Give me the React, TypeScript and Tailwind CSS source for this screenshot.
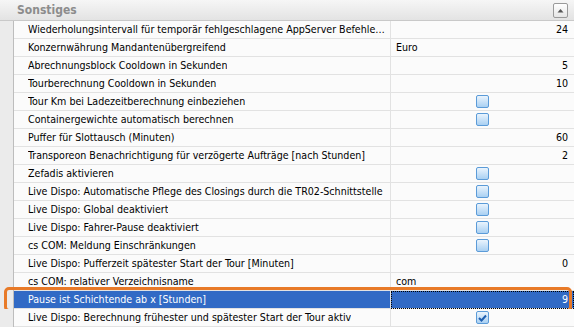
import React from 'react'

type Row = { name: string; value?: string; align?: 'left' | 'right'; check?: boolean; checked?: boolean; selected?: boolean }

const rows: Row[] = [
  { name: 'Wiederholungsintervall für temporär fehlgeschlagene AppServer Befehle (Minuten)', value: '24', align: 'right' },
  { name: 'Konzernwährung Mandantenübergreifend', value: 'Euro', align: 'left' },
  { name: 'Abrechnungsblock Cooldown in Sekunden', value: '5', align: 'right' },
  { name: 'Tourberechnung Cooldown in Sekunden', value: '10', align: 'right' },
  { name: 'Tour Km bei Ladezeitberechnung einbeziehen', check: true },
  { name: 'Containergewichte automatisch berechnen', check: true },
  { name: 'Puffer für Slottausch (Minuten)', value: '60', align: 'right' },
  { name: 'Transporeon Benachrichtigung für verzögerte Aufträge [nach Stunden]', value: '2', align: 'right' },
  { name: 'Zefadis aktivieren', check: true },
  { name: 'Live Dispo: Automatische Pflege des Closings durch die TR02-Schnittstelle', check: true },
  { name: 'Live Dispo: Global deaktiviert', check: true },
  { name: 'Live Dispo: Fahrer-Pause deaktiviert', check: true },
  { name: 'cs COM: Meldung Einschränkungen', check: true },
  { name: 'Live Dispo: Pufferzeit spätester Start der Tour [Minuten]', value: '0', align: 'right' },
  { name: 'cs COM: relativer Verzeichnisname', value: 'com', align: 'left' },
  { name: 'Pause ist Schichtende ab x [Stunden]', value: '9', align: 'right', selected: true },
  { name: 'Live Dispo: Berechnung frühester und spätester Start der Tour aktiv', check: true, checked: true },
]

const CheckBox = ({ checked }: { checked?: boolean }) => (
  <span className="flex h-[13px] w-[13px] items-center justify-center rounded-[2px] border border-[#5b9bd8] bg-gradient-to-b from-[#eaf4fd] to-[#a9d0f2]">
    {checked && (
      <svg width="9" height="8" viewBox="0 0 9 8">
        <path d="M1 4 L3.5 6.5 L8 1.5" fill="none" stroke="#1f5fb0" strokeWidth="2" />
      </svg>
    )}
  </span>
)

const App = () => {
  return (
    <div className="h-[328px] w-[574px] overflow-hidden bg-white text-[10.6px] text-black" style={{ fontFamily: '"DejaVu Sans Condensed", "DejaVu Sans", Tahoma, sans-serif' }}>
      {/** header */}
      <div className="flex h-[21px] items-center justify-between border-b border-[#c9c9c9] bg-gradient-to-b from-[#f6f6f6] to-[#e3e3e3] pl-[17px] pr-[6px]">
        <span className="text-[12px] font-bold text-[#8c8c8c]">Sonstiges</span>
        <span className="flex h-[15px] w-[15px] items-center justify-center rounded-[2px] border border-[#9a9a9a] bg-gradient-to-b from-white to-[#e6e6e6]">
          <svg width="7" height="5" viewBox="0 0 7 5">
            <path d="M0.5 4.5 L3.5 1 L6.5 4.5 Z" fill="#555" />
          </svg>
        </span>
      </div>

      {/** rows */}
      <div className="flex flex-col">
        {rows.map((r, i) => (
          <div key={i} className="relative flex h-[18px]">
            <div className="w-[14px] shrink-0 border-r border-[#bdbdbd] bg-[#ebebeb]" />
            <div className={`flex min-w-0 w-[377px] shrink-0 items-center border-b border-r border-[#e2e2e2] pl-[14px] pr-1 ${r.selected ? 'bg-[#316ac5] text-white' : 'bg-[#fbfbfb]'}`}>
              <span className="truncate">{r.name}</span>
            </div>
            <div className={`flex flex-1 items-center border-b border-[#e2e2e2] ${r.check ? 'justify-center' : r.align === 'left' ? 'justify-start pl-[5px]' : 'justify-end pr-[6px]'} ${r.selected ? 'bg-[#316ac5] text-white outline-1 outline-dotted outline-offset-[-1px] outline-black' : 'bg-[#fbfbfb]'}`}>
              {r.check ? <CheckBox checked={r.checked} /> : <span>{r.value}</span>}
            </div>
            {r.selected && (
              <div className="pointer-events-none absolute left-[4px] right-[2px] top-[-4px] bottom-[-3px] rounded-[5px] border-[3px] border-[#e87a28]" />
            )}
          </div>
        ))}
      </div>
    </div>
  )
}

export default App
